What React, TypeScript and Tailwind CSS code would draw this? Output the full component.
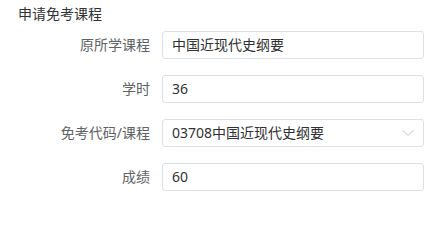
import React from 'react';

const fields = [
  { label: '原所学课程', value: '中国近现代史纲要' },
  { label: '学时', value: '36' },
  { label: '免考代码/课程', value: '03708中国近现代史纲要', select: true },
  { label: '成绩', value: '60' },
];

const App: React.FC = () => {
  return (
    <div
      className="w-[435px] h-[201px] bg-white text-sm"
      style={{ fontFamily: '"Noto Sans", "Noto Sans CJK SC", sans-serif' }}
    >
      <div className="pl-[18px] pt-1 leading-5 text-[#303133]">申请免考课程</div>

      <div className="mt-[7px] flex flex-col gap-4">
        {fields.map((f) => (
          <div key={f.label} className="flex items-center h-[28px]">
            <label className="w-[162px] pr-3 text-right text-[#606266]">{f.label}</label>
            <div className="relative w-[262px] h-[28px] border border-[#dcdfe6] rounded-[3px] flex items-center pl-[9px] text-[#303133]">
              <span>{f.value}</span>
              {f.select && (
                <svg
                  className="absolute right-[9px] top-1/2 -translate-y-1/2"
                  width="12"
                  height="7"
                  viewBox="0 0 12 7"
                  fill="none"
                >
                  <path d="M0.5 0.5 L6 6 L11.5 0.5" stroke="#c0c4cc" strokeWidth="1" />
                </svg>
              )}
            </div>
          </div>
        ))}
      </div>
    </div>
  );
};

export default App;
